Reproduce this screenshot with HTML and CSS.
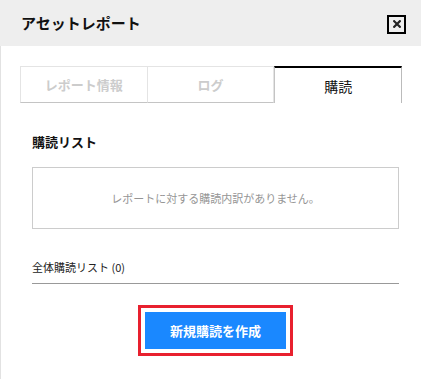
FILE: index.html
```html
<!DOCTYPE html>
<html lang="ja">
<head>
    <meta charset="UTF-8">
    <meta name="viewport" content="width=device-width, initial-scale=1.0">
    <title>アセットレポート</title>
    <link rel="stylesheet" href="styles.css">
</head>
<body>
    <div class="dialog">
        <div class="dialog-header">
            <h1>アセットレポート</h1>
            <button type="button" class="close-btn" aria-label="閉じる">
                <svg width="8" height="8" viewBox="0 0 8 8">
                    <path d="M1.2 1.2 L6.8 6.8 M6.8 1.2 L1.2 6.8" stroke="#222" stroke-width="2.2" stroke-linecap="square"/>
                </svg>
            </button>
        </div>

        <div class="dialog-body">
            <div class="tabs">
                <div class="tab">レポート情報</div>
                <div class="tab">ログ</div>
                <div class="tab active">購読</div>
            </div>

            <div class="content">
                <h2 class="section-title">購読リスト</h2>

                <div class="empty-box">レポートに対する購読内訳がありません。</div>

                <div class="total-list">全体購読リスト (0)</div>

                <div class="actions">
                    <button type="button" class="create-btn">新規購読を作成</button>
                </div>
            </div>
        </div>
    </div>
</body>
</html>
```

FILE: styles.css
```css
/* Base */
body {
    margin: 0;
    padding: 0;
    background: #fff;
    color: #111;
    font-family: "Noto Sans CJK JP", "Noto Sans", sans-serif;
}

.dialog {
    width: 421px;
    height: 379px;
    overflow: hidden;
}

/* Header */
.dialog-header {
    height: 46px;
    background: #eeeeee;
    display: flex;
    align-items: center;
    justify-content: space-between;
    padding: 0 15px 0 21px;
}

.dialog-header h1 {
    margin: 0;
    font-size: 15px;
    font-weight: bold;
    line-height: 20px;
    color: #111;
}

.close-btn {
    width: 19px;
    height: 19px;
    margin-top: 2px;
    padding: 0;
    border: 2px solid #000;
    background: #eee;
    display: flex;
    align-items: center;
    justify-content: center;
    cursor: pointer;
}

/* Body */
.dialog-body {
    border-left: 1px solid #e2e2e2;
    height: 333px;
    padding: 20px 19px 0 19px;
}

/* Tabs */
.tabs {
    display: flex;
}

.tab {
    flex: 1;
    height: 37px;
    box-sizing: border-box;
    border: 1px solid #e4e4e4;
    border-bottom-color: #c4c4c4;
    display: flex;
    align-items: center;
    justify-content: center;
    font-size: 13px;
    font-weight: bold;
    color: #cccccc;
}

.tab + .tab {
    border-left: none;
}

.tab.active {
    border-top: 2px solid #000;
    border-left: 1px solid #c4c4c4;
    border-right: 1px solid #bbbbbb;
    border-bottom: none;
    color: #111;
    font-weight: normal;
    font-size: 14px;
}

/* Content */
.content {
    padding: 0 3px 0 12px;
}

.section-title {
    margin: 29px 0 0 0;
    font-size: 13px;
    font-weight: bold;
    line-height: 20px;
}

.empty-box {
    margin-top: 15px;
    height: 62px;
    box-sizing: border-box;
    border: 1px solid #cccccc;
    display: flex;
    align-items: center;
    justify-content: center;
    font-size: 11px;
    color: #959595;
}

.total-list {
    margin-top: 28px;
    padding-bottom: 6px;
    border-bottom: 1px solid #999;
    font-size: 11px;
    line-height: 20px;
    color: #222;
}

.actions {
    display: flex;
    justify-content: center;
    margin-top: 28px;
}

.create-btn {
    width: 141px;
    height: 37px;
    border: none;
    background: #1a88ff;
    color: #fff;
    font-family: inherit;
    font-size: 13px;
    font-weight: bold;
    outline: 3px solid #e8202e;
    outline-offset: 4px;
    cursor: pointer;
}
```
